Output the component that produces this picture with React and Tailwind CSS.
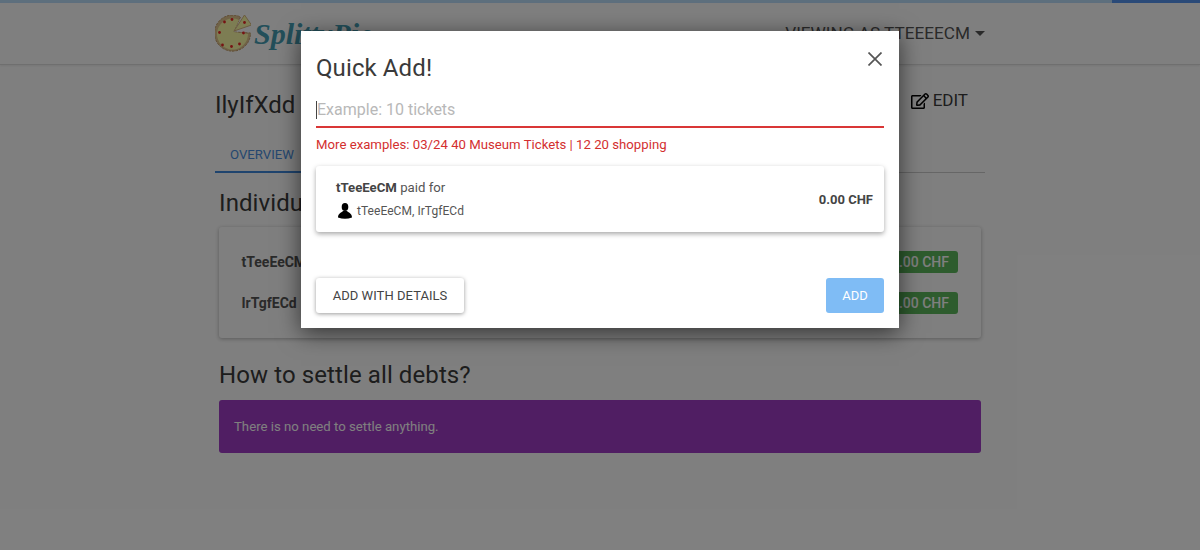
import React from "react";
import { FaRegEdit } from "react-icons/fa";

function Pizza() {
  const dots = [[13,12],[20.5,9.5],[33,12.5],[8,22.5],[11,35],[20,36.5],[28,34],[32,23]];
  return (
    <svg width="36" height="37" viewBox="3.5 5 36 37" className="shrink-0">
      <path d="M22 22 L29 7 A18 18 0 1 0 39 23 Z" fill="#e0c48e" stroke="#c09a68" strokeWidth="1" strokeDasharray="2.5 1" />
      <path d="M22 22 L27.5 10 A15.5 15.5 0 1 0 36.5 24 Z" fill="#fbfba6" />
      <path d="M33 5 L40 15 L22.5 21 Z" fill="#fbfba6" stroke="#d8b680" strokeWidth="1" />
      {dots.map(([x, y], i) => (
        <circle key={i} cx={x} cy={y} r="1.4" fill="#ee2626" />
      ))}
    </svg>
  );
}

function UserGlyph() {
  return (
    <svg width="14" height="16" viewBox="0 0 14 16" className="shrink-0 ml-[2px]">
      <ellipse cx="7" cy="4" rx="3.3" ry="4" fill="#000" />
      <path d="M0 14.5 C0 10.5 3 9.8 5 8 L9 8 C11 9.8 14 10.5 14 14.5 Q7 17 0 14.5 Z" fill="#000" />
    </svg>
  );
}

function Badge() {
  return <span className="bg-[#5cb85c] text-white text-[14px] font-medium rounded-[3px] h-[22px] w-[90px] flex items-center justify-end pr-[9px]">0.00 CHF</span>;
}

export default function App() {
  return (
    <div className="relative h-[550px] overflow-hidden bg-white font-['Roboto',sans-serif] text-[#212121]">
      <div className="h-[3px] flex bg-[#bbdefb]">
        <div className="flex-1" />
        <div className="w-[88px] bg-[#5594f0]" />
      </div>
      <header className="h-[62px] border-b border-[#dedede] shadow-[0_1px_2px_rgba(0,0,0,0.08)] bg-white">
        <div className="w-[770px] mx-auto h-full flex items-center justify-between">
          <div className="flex items-center gap-[3px]">
            <Pizza />
            <span className="font-['Liberation_Serif',serif] font-bold italic text-[30px] text-[#479fb5] leading-none">SplittyPie</span>
          </div>
          <div className="flex items-center gap-[5px] text-[17.2px] text-[#555]">
            <span>VIEWING AS TTEEEECM</span>
            <span className="border-x-[5px] border-x-transparent border-t-[5px] border-t-[#555] mt-[1px]" />
          </div>
        </div>
      </header>

      <main className="w-[770px] mx-auto">
        <div className="h-[72px] flex items-center justify-between pr-[17px]">
          <h1 className="text-[24px] text-[#3a3a3a] mt-[8px]">IlyIfXdd</h1>
          <button className="flex items-center gap-[4px] text-[17px] text-[#3a3a3a] mb-[1px]">
            <FaRegEdit className="text-[18px] text-black" />
            EDIT
          </button>
        </div>
        <nav className="h-[36px] border-b border-[#ccc] flex">
          <div className="w-[94px] border-b-2 border-[#3f88dc] h-[36px] pl-[15px] text-[13.2px] text-[#4a8fe0] pt-[8px]">OVERVIEW</div>
        </nav>
        <div className="px-[4px]">
          <h2 className="text-[24px] text-[#3a3a3a] tracking-[0.1px] leading-[28px] mt-[16px]">Individual balances</h2>
          <section className="mt-[10px] h-[111px] rounded-[3px] shadow-[0_1px_4px_rgba(0,0,0,0.3)] bg-white pl-[22.5px] pr-[23px] pt-[24px] flex flex-col gap-[19px]">
            <div className="flex items-center justify-between text-[14px] font-bold text-[#555]"><span>tTeeEeCM</span><Badge /></div>
            <div className="flex items-center justify-between text-[14px] font-bold text-[#555]"><span>IrTgfECd</span><Badge /></div>
          </section>
          <h2 className="text-[24px] text-[#3a3a3a] tracking-[0.1px] leading-[28px] mt-[23px]">How to settle all debts?</h2>
          <div className="mt-[11px] h-[53px] bg-[#a03cc6] rounded-[3px] flex items-center pl-[15px] text-[13.2px] text-white">There is no need to settle anything.</div>
        </div>
      </main>

      <div className="absolute inset-0 bg-black/50" />

      <div className="absolute left-[301px] top-[31px] w-[598px] h-[297px] bg-white shadow-[0_5px_22px_rgba(0,0,0,0.6)] px-[15px] flex flex-col">
        <div className="flex justify-between h-[62px]">
          <h3 className="text-[24px] text-[#3a3a3a] tracking-[0.1px] leading-[28px] mt-[23px]">Quick Add!</h3>
          <svg width="14" height="14" viewBox="0 0 14 14" className="mt-[21px] mr-[2px]" fill="none" stroke="#555" strokeWidth="1.7">
            <path d="M0.5 0.5 L13.5 13.5 M13.5 0.5 L0.5 13.5" />
          </svg>
        </div>
        <div className="h-[35px] border-b-2 border-[#d93636] flex items-center text-[16px] text-[#b8b8b8]">
          <span className="w-px h-[18px] bg-[#444]" />
          <span>Example: 10 tickets</span>
        </div>
        <p className="text-[13.2px] text-[#d32f2f] mt-[9px] leading-[16px]">More examples: 03/24 40 Museum Tickets | 12 20 shopping</p>
        <div className="mt-[13px] h-[66px] rounded-[3px] shadow-[0_2px_5px_rgba(0,0,0,0.35)] pl-[20px] pr-[11px] flex items-center justify-between">
          <div className="flex flex-col gap-[7px] mt-[1px]">
            <div className="text-[13.2px] text-[#555] leading-[16px]"><b className="text-[#444]">tTeeEeCM</b> paid for</div>
            <div className="flex items-center gap-[5px] text-[12px] tracking-[0.05px] text-[#555] leading-[16px]">
              <UserGlyph />
              <span>tTeeEeCM, IrTgfECd</span>
            </div>
          </div>
          <span className="text-[13px] font-bold text-[#444] mt-[1px]">0.00 CHF</span>
        </div>
        <div className="mt-[46px] flex justify-between">
          <button className="h-[35px] w-[148px] rounded-[3px] shadow-[0_1px_4px_rgba(0,0,0,0.4)] text-[13px] tracking-[0.05px] text-[#444]">ADD WITH DETAILS</button>
          <button className="h-[35px] w-[58px] rounded-[3px] bg-[#7fbcf5] text-[13px] text-white">ADD</button>
        </div>
      </div>
    </div>
  );
}
